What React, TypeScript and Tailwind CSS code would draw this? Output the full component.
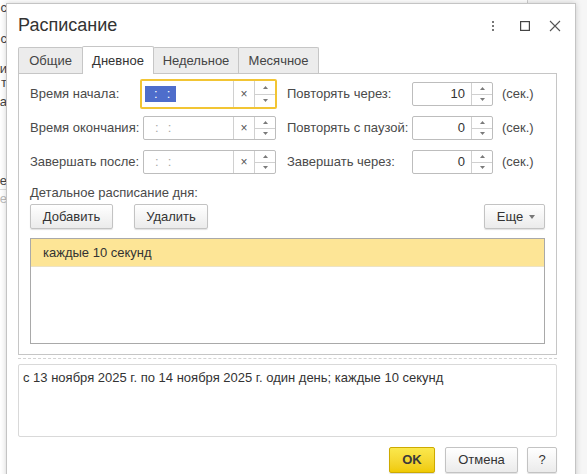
import React from 'react';

const font = "font-['Liberation_Sans',Arial,sans-serif]";

const Up = () => (
    <svg width="5" height="3" viewBox="0 0 5 3"><path d="M2.5 0L5 3H0Z" fill="#7a7a7a" /></svg>
);
const Down = () => (
    <svg width="5" height="3" viewBox="0 0 5 3"><path d="M0 0H5L2.5 3Z" fill="#7a7a7a" /></svg>
);

const Spinner = () => (
    <div className="flex w-[21px] flex-col border-l border-[#d0d0d0]">
        <div className="flex flex-1 items-center justify-center border-b border-[#d0d0d0]"><Up /></div>
        <div className="flex flex-1 items-center justify-center"><Down /></div>
    </div>
);

const TimeMask = ({ selected }: { selected?: boolean }) => (
    <span className={`inline-flex h-[16px] items-center gap-[9px] pl-[9px] pr-[6px] ${selected ? 'bg-[#4e6dcb] text-white' : 'text-[#a8a8a8]'}`}>
        <span>:</span>
        <span>:</span>
    </span>
);

const TimeField = ({ focused }: { focused?: boolean }) => {
    if (focused) {
        return (
            <div className="flex h-[30px] w-[137px] rounded-[2px] border-2 border-[#f2c534] bg-white">
                <div className="flex flex-1 items-center pl-[3px]"><TimeMask selected /></div>
                <div className="flex w-[21px] items-center justify-center border-l border-[#d0d0d0] text-[12px] text-[#555]">×</div>
                <Spinner />
            </div>
        );
    }
    return (
        <div className="ml-[3px] flex h-[24px] w-[133px] rounded-[2px] border border-[#bdbdbd] bg-white">
            <div className="flex flex-1 items-center pl-[2px]"><TimeMask /></div>
            <div className="flex w-[21px] items-center justify-center border-l border-[#d0d0d0] text-[12px] text-[#555]">×</div>
            <Spinner />
        </div>
    );
};

const NumberField = ({ value }: { value: string }) => (
    <div className="flex h-[24px] w-[81px] rounded-[2px] border border-[#bdbdbd] bg-white">
        <div className="flex flex-1 items-center justify-end pr-[6px] text-[#333]">{value}</div>
        <Spinner />
    </div>
);

const rows = [
    { label: 'Время начала:', focused: true, right: 'Повторять через:', value: '10' },
    { label: 'Время окончания:', focused: false, right: 'Повторять с паузой:', value: '0' },
    { label: 'Завершать после:', focused: false, right: 'Завершать через:', value: '0' },
];

const tabs = [
    { title: 'Общие', w: 'w-[65px]' },
    { title: 'Дневное', w: 'w-[72px]' },
    { title: 'Недельное', w: 'w-[86px]' },
    { title: 'Месячное', w: 'w-[81px]' },
];

const btn = 'flex h-[25px] items-center justify-center rounded-[2px] border border-[#c3c3c3] bg-gradient-to-b from-white to-[#ebebeb] text-[#333] shadow-[0_1px_1px_rgba(0,0,0,0.12)]';

export default function App() {
    return (
        <div className={`relative h-[474px] w-[587px] overflow-hidden bg-[#f6f6f6] text-[13px] ${font}`}>
            {/* window behind the dialog, only its left edge shows */}
            <div className="absolute left-0 top-0 h-[474px] w-[528px] border-r border-[#cfcfcf] bg-white">
                <div className="flex w-[7px] flex-col items-end text-[13px] leading-[12px] text-[#444]">
                    <span className="mt-[2px]">с</span>
                    <span className="mt-[19px]">с</span>
                    <span className="mt-[18px]">и</span>
                    <span className="mt-[2px]">т</span>
                    <span className="mt-[7px]">а</span>
                    <span className="mt-[67px]">е</span>
                    <span className="mt-[2px] w-full border-t border-[#ddd]" />
                    <span className="mt-[3px] text-[#bbb]">е</span>
                </div>
            </div>

            {/* dialog */}
            <div className="absolute left-[6px] top-[3px] flex h-[480px] w-[570px] flex-col border border-[#c4c4c4] bg-white pl-[11px] pr-[18px] shadow-[0_0_6px_rgba(0,0,0,0.18)]">
                <header className="-mr-[4px] flex h-[42px] items-center pt-[1px]">
                    <h1 className="text-[18px] text-[#333]">Расписание</h1>
                    <div className="ml-auto flex items-center">
                        <div className="flex flex-col gap-[2px]">
                            <span className="h-[2px] w-[2px] bg-[#777]" />
                            <span className="h-[2px] w-[2px] bg-[#777]" />
                            <span className="h-[2px] w-[2px] bg-[#777]" />
                        </div>
                        <svg className="ml-[26px]" width="10" height="10" viewBox="0 0 10 10">
                            <rect x="0.6" y="0.6" width="8.8" height="8.8" fill="none" stroke="#444" strokeWidth="1.2" />
                        </svg>
                        <svg className="ml-[19px]" width="12" height="12" viewBox="0 0 12 12">
                            <path d="M1 1L11 11M11 1L1 11" stroke="#555" strokeWidth="1.1" />
                        </svg>
                    </div>
                </header>

                <div className="flex h-[27px] items-end">
                    {tabs.map((t, i) =>
                        i === 1 ? (
                            <div key={t.title} className={`relative z-10 -mb-px -ml-px flex h-[28px] items-center justify-center rounded-t-[2px] border border-b-0 border-[#c6c6c6] bg-white text-[#333] ${t.w}`}>
                                {t.title}
                            </div>
                        ) : (
                            <div key={t.title} className={`flex h-[26px] items-center justify-center rounded-t-[2px] border border-b-0 border-[#c6c6c6] bg-[#ececec] text-[#444] ${i > 0 ? '-ml-px' : ''} ${t.w}`}>
                                {t.title}
                            </div>
                        )
                    )}
                </div>

                <section className="flex h-[282px] flex-col border border-[#c6c6c6] px-[11px] pt-[3px]">
                    {rows.map((r) => (
                        <div key={r.label} className="flex h-[34px] items-center">
                            <span className="w-[110px] text-[#4a4a4a]">{r.label}</span>
                            <div className="w-[137px]">
                                <TimeField focused={r.focused} />
                            </div>
                            <span className="ml-[10px] w-[125px] text-[#4a4a4a]">{r.right}</span>
                            <NumberField value={r.value} />
                            <span className="ml-[9px] text-[#4a4a4a]">(сек.)</span>
                        </div>
                    ))}

                    <div className="mt-[4px] flex h-[20px] items-center text-[#4a4a4a]">Детальное расписание дня:</div>

                    <div className="mt-[1px] flex">
                        <button className={`${btn} w-[83px]`}>Добавить</button>
                        <button className={`${btn} ml-[21px] w-[74px]`}>Удалить</button>
                        <button className={`${btn} ml-auto w-[61px] gap-[6px] pl-[3px]`}>
                            Еще
                            <svg width="6" height="4" viewBox="0 0 6 4"><path d="M0 0H6L3 4Z" fill="#777" /></svg>
                        </button>
                    </div>

                    <div className="mb-[10px] mt-[9px] flex flex-1 flex-col border border-[#a9a9a9] bg-white">
                        <div className="flex h-[28px] items-center border-b border-[#ede3c4] bg-[#fde596] pl-[12px] text-[#333]">
                            каждые 10 секунд
                        </div>
                    </div>
                </section>

                <div className="mt-[3px] border-t border-dashed border-[#d3d3d3]" />

                <div className="mt-[5px] h-[73px] rounded-[2px] border border-[#d9d9d9] pl-[4px] pt-[3px] text-[#333]">
                    с 13 ноября 2025 г. по 14 ноября 2025 г. один день; каждые 10 секунд
                </div>

                <div className="mt-[10px] flex justify-end">
                    <button className="flex h-[26px] w-[46px] items-center justify-center rounded-[2px] border border-[#cdaa00] bg-gradient-to-b from-[#fbe84c] to-[#f0ca00] font-bold text-[#3a3a3a] shadow-[0_1px_1px_rgba(0,0,0,0.15)]">
                        OK
                    </button>
                    <button className={`${btn} ml-[10px] h-[26px] w-[73px]`}>Отмена</button>
                    <button className={`${btn} ml-[9px] h-[26px] w-[30px]`}>?</button>
                </div>
            </div>
        </div>
    );
}
